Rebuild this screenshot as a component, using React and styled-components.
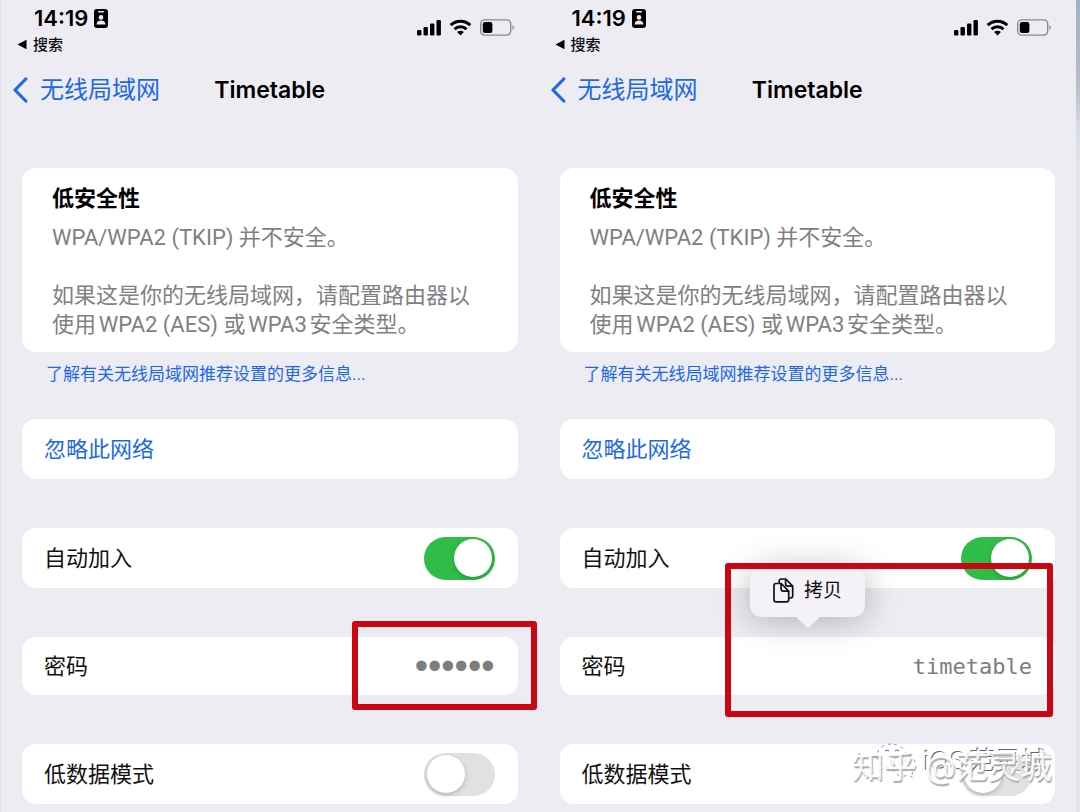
import React, { useState } from 'react';
import styled, { createGlobalStyle } from 'styled-components';

const App = () => {
  return (
    <>
      <GlobalStyle />
      <Page>
        <Screen password="******" type="password">
          <MaskedHighlight />
        </Screen>
        <Screen password="timetable" type="text" watermark>
          <CopyButton type="button">
            <CopyIcon />
            拷贝
          </CopyButton>
          <PlainHighlight />
        </Screen>
        <Edge />
      </Page>
    </>
  );
};

const Screen = ({ password, type, watermark, children }) => {
  const [autoJoin, setAutoJoin] = useState(true);
  const [lowData, setLowData] = useState(false);

  return (
    <Panel>
      <StatusBar>
        <div>
          <Time>
            14:19
            <BadgeIcon />
          </Time>
          <BackToApp type="button">
            <svg width="10" height="11" viewBox="0 0 10 11">
              <path d="M9.5 .8v9.4L.5 5.5z" fill="#000" />
            </svg>
            搜索
          </BackToApp>
        </div>
        <StatusIcons />
      </StatusBar>
      <NavBar>
        <BackLink href="#wlan">
          <svg width="16" height="26" viewBox="0 0 16 26">
            <path d="M13.8 2L3 13l10.8 11" fill="none" stroke="#1c69e8" strokeWidth="3.2" strokeLinecap="round" strokeLinejoin="round" />
          </svg>
          无线局域网
        </BackLink>
        <Title>Timetable</Title>
      </NavBar>
      <WarningCard>
        <h2>低安全性</h2>
        <p>WPA/WPA2 (TKIP) 并不安全。</p>
        <p>如果这是你的无线局域网，请配置路由器以使用WPA2 (AES) 或WPA3安全类型。</p>
      </WarningCard>
      <NoteLink href="#more">了解有关无线局域网推荐设置的更多信息...</NoteLink>
      <Rows>
        <ForgetButton type="button">忽略此网络</ForgetButton>
        <Row as="label">
          自动加入
          <Switch
            type="checkbox"
            role="switch"
            checked={autoJoin}
            onChange={(e) => setAutoJoin(e.target.checked)}
          />
        </Row>
        <Row $short>
          <RowLabel>
            密码
            <PasswordInput type={type} value={password} readOnly />
          </RowLabel>
          {children}
        </Row>
        <Row>
          <RowLabel>
            低数据模式
            <Switch
              type="checkbox"
              role="switch"
              checked={lowData}
              onChange={(e) => setLowData(e.target.checked)}
            />
          </RowLabel>
          {watermark && <Watermark />}
        </Row>
      </Rows>
    </Panel>
  );
};

const BadgeIcon = () => (
  <svg width="14" height="19" viewBox="0 0 14 19">
    <rect x="0" y="0" width="14" height="19" rx="3" fill="#000" />
    <rect x="4" y="2" width="6" height="1.5" rx=".7" fill="#eeecf3" />
    <circle cx="7" cy="8.4" r="2.3" fill="#eeecf3" />
    <path d="M2.6 15.6c0-2.8 1.8-4.2 4.4-4.2s4.4 1.4 4.4 4.2z" fill="#eeecf3" />
  </svg>
);

const StatusIcons = () => (
  <Icons>
    <svg width="24" height="17" viewBox="0 0 24 17">
      <rect x="0" y="11" width="4.4" height="5.5" rx="1.2" />
      <rect x="6.5" y="8" width="4.4" height="8.5" rx="1.2" />
      <rect x="13" y="4.5" width="4.4" height="12" rx="1.2" />
      <rect x="19.5" y="1" width="4.4" height="15.5" rx="1.2" />
    </svg>
    <svg width="23" height="17" viewBox="0 0 23 17">
      <path d="M1.7 6.2C7.2.9 15.8.9 21.3 6.2M5.5 10.2c3.4-3.2 8.6-3.2 12 0" fill="none" stroke="#000" strokeWidth="3" />
      <path d="M11.5 16.6l-3.4-3.5c1.9-1.7 4.9-1.7 6.8 0z" />
    </svg>
    <svg width="35" height="17" viewBox="0 0 35 17">
      <rect x=".7" y=".9" width="30" height="15.2" rx="4" fill="none" stroke="#8b8990" strokeWidth="1.4" />
      <rect x="2.8" y="3" width="9.6" height="11" rx="2.2" />
      <path d="M32.5 6v5c1.9-.7 1.9-4.3 0-5z" fill="#8b8990" />
    </svg>
  </Icons>
);

const CopyIcon = () => (
  <svg width="21" height="25" viewBox="0 0 21 25" fill="none" stroke="#111" strokeWidth="1.7" strokeLinejoin="round">
    <path d="M6.2 5V3.3c0-1.4.8-2.3 2.2-2.3h4.4l6.9 7.2v9.6c0 1.400-.8 2.200-2.200 2.200H16" />
    <path d="M12.6 1v4.900c0 1.400.8 2.200 2.200 2.200h4.900" />
    <path d="M3 5.500h5.200l7.500 7.600v8.600c0 1.400-.8 2.200-2.200 2.200H3.200c-1.400 0-2.200-.8-2.200-2.200v-14c0-1.400.8-2.200 2-2.200z" />
    <path d="M8.100 5.500v5.400c0 1.400.8 2.200 2.200 2.200h5.400" />
  </svg>
);

const Watermark = () => (
  <Stamp>
    <Signature>
      <svg width="42" height="37" viewBox="0 0 42 37" fill="#fff" fillOpacity=".7" stroke="#777" strokeWidth=".8" strokeDasharray="3 4">
        <path d="M15 1C7 1 1 6 1 13c0 4 2 7 5 9l-1 5 5-3c9 3 20-1 20-11C30 6 23 1 15 1z" />
        <path d="M28 12c-7 0-12 5-12 11s6 11 13 10l4-1 4 3-1-5c3-2 4-4 4-7 0-6-5-11-12-11z" />
        <path d="M9 8l2-1 2 1M19 8l2-1 2 1M23 20l2-1 2 1M31 20l2-1 2 1" stroke="#333" strokeDasharray="none" />
      </svg>
      iOS范灵城
    </Signature>
    <Author>知乎 @范灵城</Author>
  </Stamp>
);

const GlobalStyle = createGlobalStyle`
  * {
    box-sizing: border-box;
  }
  body {
    margin: 0;
    background: #eeecf3;
    color: #111;
    font-family: Inter, 'Noto Sans CJK SC', sans-serif;
    font-size: 22px;
    line-height: 29px;
    text-autospace: normal;
  }
  button, input {
    margin: 0;
    padding: 0;
    border: none;
    background: none;
    color: inherit;
    font: inherit;
  }
  a {
    color: #1c69e8;
    text-decoration: none;
  }
  svg {
    display: block;
    flex-shrink: 0;
  }
`;

const Page = styled.div`
  display: grid;
  grid-template-columns: 1fr 1fr 4px;
  min-height: 100vh;
  overflow: hidden;
  border-left: 1px solid #e2e0e6;
`;

const Edge = styled.div`
  background: linear-gradient(#9fb3c6 0, #b6bbc9 80px, #d6dee5 130px, #e5e4e8 170px);
`;

const Panel = styled.section`
  display: flex;
  flex-direction: column;
  padding: 0 21px 8px;
`;

const StatusBar = styled.header`
  display: flex;
  justify-content: space-between;
  align-items: flex-start;
  margin: 0 3px 0 -5px;
  padding-top: 5px;
`;

const Time = styled.div`
  display: flex;
  align-items: center;
  gap: 6px;
  height: 26px;
  padding-left: 17px;
  color: #000;
  font-size: 22px;
  font-weight: 600;
`;

const BackToApp = styled.button`
  display: flex;
  align-items: center;
  gap: 6px;
  height: 27px;
  font-size: 15px;
  font-weight: 500;
  line-height: 20px;
`;

const Icons = styled.div`
  display: flex;
  gap: 8px;
  margin-top: 14px;
`;

const NavBar = styled.nav`
  display: grid;
  grid-template-columns: 1fr auto 1fr;
  align-items: center;
  height: 40px;
  margin: 12px -10px 58px;
`;

const BackLink = styled.a`
  display: flex;
  align-items: center;
  gap: 12px;
  font-size: 24px;
  line-height: 28px;
  white-space: nowrap;
`;

const Title = styled.h1`
  margin: 0;
  color: #000;
  font-size: 23px;
  font-weight: 600;
`;

const WarningCard = styled.article`
  padding: 16px 30px 13px;
  border-radius: 14px;
  background: #fff;

  h2 {
    margin: 0 0 10px;
    color: #000;
    font-size: 22px;
    font-weight: 700;
  }
  p {
    margin: 0;
    color: #808083;
    font-family: Roboto, 'Noto Sans CJK SC', sans-serif;
  }
  p + p {
    margin-top: 29px;
  }
`;

const NoteLink = styled.a`
  margin: 10px 24px 33px;
  font-family: Roboto, 'Noto Sans CJK SC', sans-serif;
  font-size: 17px;
  line-height: 24px;
`;

const Rows = styled.div`
  display: flex;
  flex-direction: column;
  gap: 49px;
`;

const Row = styled.div`
  position: relative;
  display: flex;
  align-items: center;
  justify-content: space-between;
  height: ${(props) => (props.$short ? '58px' : '60px')};
  padding: 0 23px 0 22px;
  border-radius: 14px;
  background: #fff;
`;

const ForgetButton = styled.button`
  height: 60px;
  padding: 0 22px;
  border-radius: 14px;
  background: #fff;
  color: #1c69e8;
  text-align: left;
  cursor: pointer;
`;

const Switch = styled.input`
  appearance: none;
  display: flex;
  align-items: center;
  width: 71px;
  height: 43px;
  padding: 0 3px;
  border-radius: 22px;
  background: #e1e0e3;
  cursor: pointer;

  &::before {
    content: '';
    width: 38px;
    height: 38px;
    border-radius: 50%;
    background: #fff;
    box-shadow: 0 2px 5px rgba(0, 0, 0, 0.2);
  }
  &:checked {
    justify-content: flex-end;
    background: #30bd47;
  }
`;

const RowLabel = styled.label`
  display: flex;
  flex: 1;
  align-items: center;
  justify-content: space-between;
`;

const PasswordInput = styled.input`
  width: 200px;
  color: #7d7d80;
  font-family: ${(props) => (props.type === 'password' ? "'Liberation Sans', sans-serif" : "'DejaVu Sans Mono', monospace")};
  font-size: ${(props) => (props.type === 'password' ? '38px' : '22px')};
  text-align: right;
  outline: none;
`;

const Highlight = styled.div`
  position: absolute;
  border: 6px solid #cb0512;
  border-radius: 3px;
  pointer-events: none;
`;

const MaskedHighlight = styled(Highlight)`
  top: -16px;
  right: -19px;
  width: 185px;
  height: 89px;
`;

const PlainHighlight = styled(Highlight)`
  top: -74px;
  right: 2px;
  width: 328px;
  height: 154px;
`;

const CopyButton = styled.button`
  position: absolute;
  top: -69px;
  right: 190px;
  display: flex;
  align-items: center;
  justify-content: center;
  gap: 10px;
  width: 115px;
  height: 49px;
  padding-bottom: 4px;
  border-radius: 12px;
  background: #f4f2f7;
  box-shadow: 0 2px 34px rgba(0, 0, 0, 0.28);
  font-size: 19px;

  &::after {
    content: '';
    position: absolute;
    top: 100%;
    left: 50%;
    margin-left: -12px;
    border: 12px solid transparent;
    border-top: 11px solid #f4f2f7;
    border-bottom: none;
  }
`;

const Stamp = styled.div`
  position: absolute;
  top: -4px;
  right: 3px;
  width: 200px;
  height: 54px;
  pointer-events: none;
`;

const Signature = styled.div`
  position: absolute;
  top: 3px;
  right: 4px;
  display: flex;
  align-items: center;
  gap: 6px;
  color: #fff;
  font-size: 26px;
  text-shadow: -1px -1px 0 #666;
  white-space: nowrap;
`;

const Author = styled.div`
  position: absolute;
  top: 9px;
  right: 0;
  color: rgba(255, 255, 255, 0.9);
  font-size: 32px;
  line-height: 36px;
  text-shadow: 1px 2px 1px #aaa;
  white-space: nowrap;
`;

export default App;
